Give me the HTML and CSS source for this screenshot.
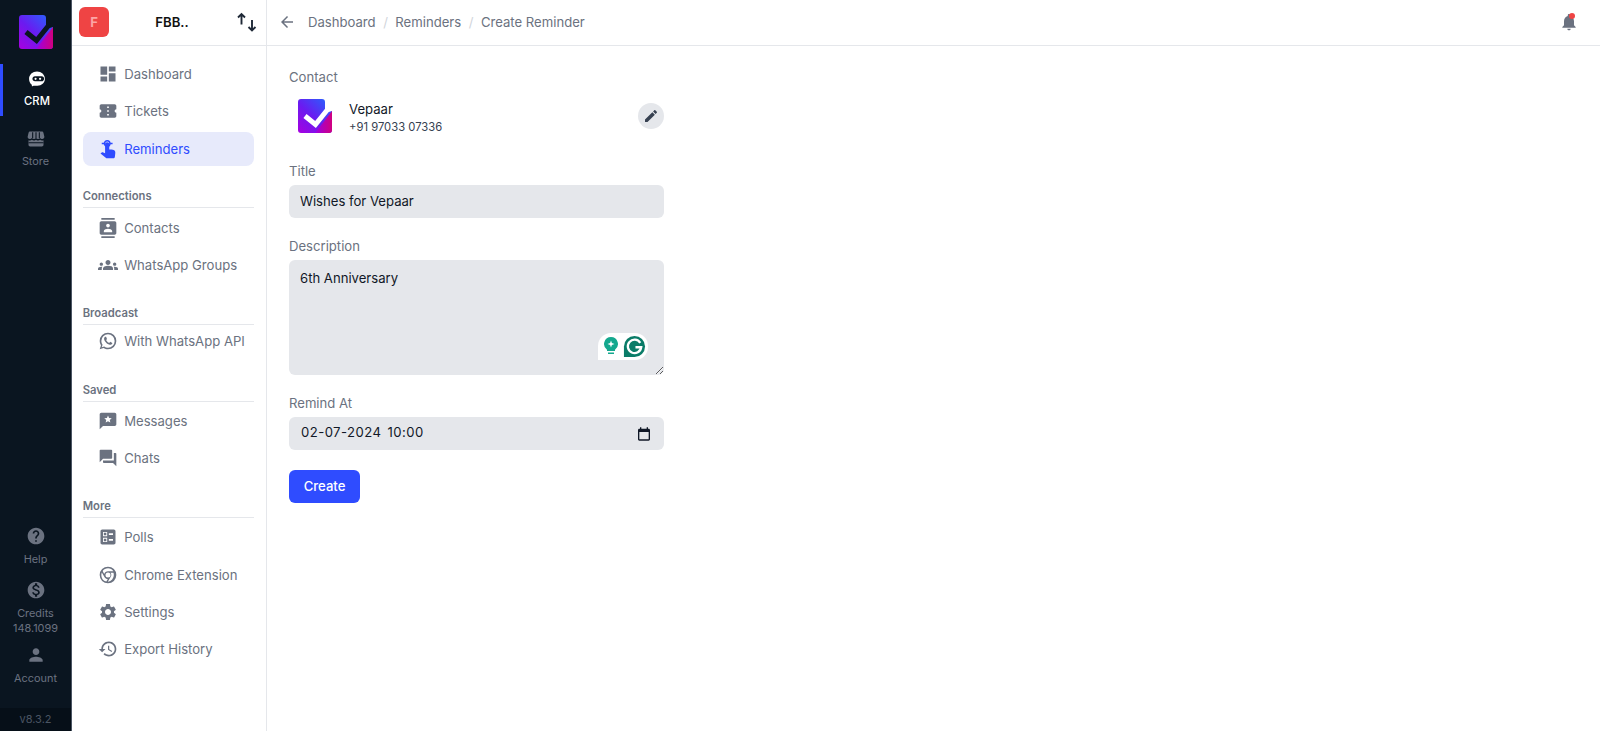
FILE: index.html
```html
<!DOCTYPE html>
<html lang="en">
<head>
<meta charset="utf-8">
<title>Create Reminder</title>
<link rel="stylesheet" href="styles.css">
</head>
<body>
<div class="app">
  <aside class="rail">
    <svg class="rail-logo" viewBox="0 0 34 34">
      <defs>
        <linearGradient id="lg1" x1="1" y1="0" x2="0" y2="1">
          <stop offset="0" stop-color="#1f6bff"/><stop offset="0.55" stop-color="#6a1bf0"/><stop offset="1" stop-color="#a800e0"/>
        </linearGradient>
        <linearGradient id="lg2" x1="0" y1="0" x2="1" y2="0">
          <stop offset="0" stop-color="#9a00e6"/><stop offset="1" stop-color="#d1007f"/>
        </linearGradient>
      </defs>
      <path d="M3 0H24Q27 0 27 3V14L34 12V31Q34 34 31 34H3Q0 34 0 31V3Q0 0 3 0Z" fill="url(#lg1)"/>
      <path d="M34 12V31Q34 34 31 34H17Z" fill="url(#lg2)"/>
      <path d="M7 17L17.500 25.500L30 10" fill="none" stroke="#0a1520" stroke-width="5"/>
    </svg>
    <nav class="rail-top">
      <a class="rail-item rail-item-active">
        <svg class="rail-icon" viewBox="0 0 24 24"><path fill="#fff" d="M12 3c5.200 0 9.500 3.800 9.500 8.800 0 4.800-4 8.400-9 8.400H8c-.8 0-1.300.4-2 .8-.2-1-.2-1.700-.5-2.300C3.500 17.200 2.500 14.700 2.500 11.800 2.500 6.800 6.800 3 12 3z"/><path fill="#0a1520" d="M9.500 8.800h8c2 0 3 1.200 3 2.900s-1.200 3.100-3 3.100h-8C7.800 14.800 6.500 13.500 6.500 11.800s1.300-3 3-3z"/><circle cx="10.300" cy="11.800" r="1.300" fill="#fff"/><circle cx="15.700" cy="11.800" r="1.300" fill="#fff"/></svg>
        <span>CRM</span>
      </a>
      <a class="rail-item">
        <svg class="rail-icon" viewBox="0 0 24 24"><path fill="#6b7280" d="M5 3h14c1 0 1.700.6 1.900 1.500L22 9c.3 1.800-1 3-2.500 3-1 0-2-.5-2.500-1.300-.6.800-1.500 1.300-2.500 1.300s-1.900-.5-2.500-1.300c-.6.800-1.500 1.300-2.500 1.300s-1.900-.5-2.500-1.300C6.500 11.500 5.500 12 4.500 12 3 12 1.700 10.800 2 9l1.100-4.500C3.300 3.600 4 3 5 3zM3 13.400c1.700.5 3.200.2 4-.4.800.6 1.800.9 2.500.9s2-.3 2.500-.9c.5.600 1.800.9 2.500.9s1.700-.3 2.500-.9c.8.600 2.300.9 4 .4V19c0 1.100-.9 2-2 2H5c-1.100 0-2-.9-2-2z"/><path stroke="#0a1520" stroke-width="1.300" d="M8 4v7M12 4v7M16 4v7M3 16.500h18"/></svg>
        <span>Store</span>
      </a>
    </nav>
    <nav class="rail-bottom">
      <a class="rail-item rail-item-tight">
        <svg class="rail-icon" viewBox="0 0 24 24"><path fill="#6b7280" d="M12 2C6.480 2 2 6.480 2 12s4.480 10 10 10 10-4.480 10-10S17.520 2 12 2zm1 17h-2v-2h2v2zm2.070-7.750l-.9.920C13.450 12.900 13 13.500 13 15h-2v-.5c0-1.100.45-2.100 1.170-2.830l1.240-1.260c.37-.36.59-.86.59-1.410 0-1.100-.9-2-2-2s-2 .9-2 2H8c0-2.210 1.790-4 4-4s4 1.790 4 4c0 .88-.36 1.680-.93 2.250z"/></svg>
        <span>Help</span>
      </a>
      <a class="rail-item rail-item-tight rail-item-credits">
        <svg class="rail-icon" viewBox="0 0 24 24"><path fill="#6b7280" d="M12 2C6.480 2 2 6.480 2 12s4.480 10 10 10 10-4.480 10-10S17.520 2 12 2zm1.410 16.090V20h-2.670v-1.930c-1.710-.36-3.160-1.460-3.270-3.400h1.960c.1 1.050.82 1.870 2.650 1.870 1.960 0 2.400-.98 2.400-1.590 0-.83-.44-1.610-2.670-2.140-2.480-.6-4.180-1.620-4.180-3.670 0-1.720 1.390-2.840 3.110-3.210V4h2.670v1.950c1.860.45 2.790 1.860 2.850 3.390H14.300c-.05-1.110-.64-1.870-2.220-1.870-1.500 0-2.400.68-2.400 1.640 0 .84.65 1.390 2.670 1.910s4.180 1.390 4.180 3.910c-.01 1.830-1.380 2.830-3.120 3.160z"/></svg>
        <span>Credits<br>148.1099</span>
      </a>
      <a class="rail-item rail-item-tight rail-item-account">
        <svg class="rail-icon" viewBox="0 0 24 24"><path fill="#6b7280" d="M12 12c2.210 0 4-1.790 4-4s-1.790-4-4-4-4 1.790-4 4 1.790 4 4 4zm0 2c-2.670 0-8 1.340-8 4v2h16v-2c0-2.660-5.330-4-8-4z"/></svg>
        <span>Account</span>
      </a>
    </nav>
    <div class="rail-version">v8.3.2</div>
  </aside>

  <aside class="sidebar">
    <header class="org">
      <div class="org-avatar">F</div>
      <div class="org-name">FBB..</div>
      <svg class="org-swap" viewBox="0 0 24 24"><path fill="none" stroke="#1f2937" stroke-width="1.900" d="M6.500 4V14.500M3 7.500l3.500-3.500L10 7.500M17 10V20.500M13.500 17l3.500 3.500 3.500-3.500"/></svg>
    </header>
    <nav class="menu">
      <a class="menu-item"><svg viewBox="0 0 24 24"><path d="M3 13h8V3H3v10zm0 8h8v-6H3v6zm10 0h8V11h-8v10zm0-18v6h8V3h-8z"/></svg>Dashboard</a>
      <a class="menu-item"><svg viewBox="0 0 24 24"><path d="M22 10V6c0-1.110-.9-2-2-2H4c-1.100 0-1.990.89-1.990 2v4c1.100 0 1.990.9 1.990 2s-.89 2-2 2v4c0 1.100.9 2 2 2h16c1.100 0 2-.9 2-2v-4c-1.100 0-2-.9-2-2s.9-2 2-2zm-9 7.500h-2v-2h2v2zm0-4.500h-2v-2h2v2zm0-4.500h-2v-2h2v2z"/></svg>Tickets</a>
      <a class="menu-item menu-item-active"><svg viewBox="0 0 24 24"><path d="M8.500 6c0-1 1-2 2.500-2s2.500 1 2.500 2v6.500H16c2.800 0 5 1.200 4.800 4l-.6 5c-.1.9-.9 1.500-1.800 1.500H10L3 17.500l1.500-1.200c.6-.5 1.200-.4 1.800-.1l2.200 1z"/><circle class="menu-ring" cx="11" cy="5.500" r="3.300"/><path class="menu-ring" d="M4.500 5.500h3M14.500 5.500h3"/></svg>Reminders</a>

      <h3 class="menu-title">Connections</h3>
      <a class="menu-item"><svg viewBox="0 0 24 24"><path d="M20 0H4v2h16V0zM4 24h16v-2H4v2zM20 4H4c-1.100 0-2 .9-2 2v12c0 1.100.9 2 2 2h16c1.100 0 2-.9 2-2V6c0-1.100-.9-2-2-2zm-8 2.750c1.240 0 2.250 1.010 2.250 2.250s-1.010 2.250-2.250 2.250S9.750 10.240 9.750 9 10.760 6.750 12 6.750zM17 17H7v-1.500c0-1.670 3.330-2.500 5-2.500s5 .83 5 2.500V17z"/></svg>Contacts</a>
      <a class="menu-item"><svg viewBox="0 0 24 24"><path d="M12 12.750c1.630 0 3.070.39 4.240.9 1.080.48 1.760 1.560 1.760 2.730V18H6v-1.610c0-1.180.68-2.260 1.760-2.730 1.170-.52 2.610-.91 4.240-.91zM4 13c1.100 0 2-.9 2-2s-.9-2-2-2-2 .9-2 2 .9 2 2 2zm1.130 1.100c-.37-.06-.74-.1-1.130-.1-.99 0-1.930.21-2.780.58C.48 14.900 0 15.620 0 16.430V18h4.500v-1.610c0-.83.23-1.610.63-2.290zM20 13c1.100 0 2-.9 2-2s-.9-2-2-2-2 .9-2 2 .9 2 2 2zm4 3.430c0-.81-.48-1.530-1.220-1.850-.85-.37-1.790-.58-2.780-.58-.39 0-.76.04-1.130.1.4.68.63 1.460.63 2.290V18H24v-1.570zM12 6c1.660 0 3 1.340 3 3s-1.340 3-3 3-3-1.340-3-3 1.340-3 3-3z"/></svg>WhatsApp Groups</a>

      <h3 class="menu-title menu-title-snug">Broadcast</h3>
      <a class="menu-item"><svg viewBox="0 0 24 24"><path d="M16.750 13.960c.25.13.41.2.46.3.06.11.04.61-.21 1.180-.2.56-1.240 1.100-1.700 1.120-.46.02-.47.36-2.960-.73-2.490-1.090-3.990-3.750-4.110-3.920-.12-.17-.96-1.380-.92-2.610.05-1.220.69-1.800.95-2.040.24-.26.51-.29.68-.26h.47c.15 0 .36-.06.55.45l.69 1.870c.06.13.1.28.01.44l-.27.41-.39.42c-.12.12-.26.25-.12.5.12.26.62 1.090 1.320 1.780.91.88 1.710 1.170 1.950 1.300.24.14.39.12.54-.04l.81-.94c.19-.25.35-.19.58-.11l1.670.88M12 2a10 10 0 0 1 10 10 10 10 0 0 1-10 10c-1.970 0-3.800-.57-5.350-1.550L2 22l1.550-4.650A9.969 9.969 0 0 1 2 12 10 10 0 0 1 12 2m0 2a8 8 0 0 0-8 8c0 1.720.54 3.310 1.460 4.610L4.500 19.500l2.890-.96A7.950 7.950 0 0 0 12 20a8 8 0 0 0 8-8 8 8 0 0 0-8-8z"/></svg>With WhatsApp API</a>

      <h3 class="menu-title menu-title-saved">Saved</h3>
      <a class="menu-item"><svg viewBox="0 0 24 24"><path fill-rule="evenodd" d="M20 2H4c-1.100 0-1.990.9-1.990 2L2 22l4-4h14c1.100 0 2-.9 2-2V4c0-1.100-.9-2-2-2zm-8 3.500l1.300 2.900 3.200.3-2.400 2.100.7 3.100-2.800-1.600-2.800 1.600.7-3.100-2.400-2.100 3.200-.3z"/></svg>Messages</a>
      <a class="menu-item"><svg viewBox="0 0 24 24"><path d="M21 6h-2v9H6v2c0 .55.45 1 1 1h11l4 4V7c0-.55-.45-1-1-1zm-4 6V3c0-.55-.45-1-1-1H3c-.55 0-1 .45-1 1v14l4-4h10c.55 0 1-.45 1-1z"/></svg>Chats</a>

      <h3 class="menu-title">More</h3>
      <a class="menu-item"><svg viewBox="0 0 24 24"><path fill-rule="evenodd" d="M13 9.500h5v-2h-5v2zm0 7h5v-2h-5v2zm6 4.500H5c-1.100 0-2-.9-2-2V5c0-1.100.9-2 2-2h14c1.100 0 2 .9 2 2v14c0 1.100-.9 2-2 2zM6 11h5V6H6v5zm1-4h3v3H7V7zM6 18h5v-5H6v5zm1-4h3v3H7v-3z"/></svg>Polls</a>
      <a class="menu-item"><svg viewBox="0 0 24 24"><path fill-rule="evenodd" d="M12 2a10 10 0 1 0 0 20 10 10 0 0 0 0-20zm0 2c2.700 0 5.100 1.300 6.500 3.400H12c-2.200 0-4 1.400-4.600 3.300L5.600 7.300C7 5.300 9.400 4 12 4zm3 8a3 3 0 1 1-6 0 3 3 0 0 1 6 0zM4 12c0-1.100.2-2.100.6-3l3.300 5.700c.8 1.300 2.200 2.200 3.800 2.200l-1.700 3A8 8 0 0 1 4 12zm8 8h-.2l3.300-5.600c.6-.7.900-1.500.9-2.400 0-1-.4-1.900-1-2.600h3.500c.3.800.5 1.700.5 2.600a8 8 0 0 1-7 8z"/></svg>Chrome Extension</a>
      <a class="menu-item"><svg viewBox="0 0 24 24"><path d="M19.140 12.940c.04-.3.06-.61.06-.94 0-.32-.02-.64-.07-.94l2.030-1.580c.18-.14.23-.41.12-.61l-1.920-3.320c-.12-.22-.37-.29-.59-.22l-2.390.96c-.5-.38-1.030-.7-1.620-.94l-.36-2.540c-.04-.24-.24-.41-.48-.41h-3.840c-.24 0-.43.17-.47.41l-.36 2.540c-.59.24-1.130.57-1.620.94l-2.390-.96c-.22-.08-.47 0-.59.22L2.740 8.870c-.12.21-.08.47.12.61l2.030 1.580c-.05.3-.09.63-.09.94s.02.64.07.94l-2.030 1.580c-.18.14-.23.41-.12.61l1.920 3.320c.12.22.37.29.59.22l2.390-.96c.5.38 1.030.7 1.620.94l.36 2.540c.05.24.24.41.48.41h3.840c.24 0 .44-.17.47-.41l.36-2.540c.59-.24 1.130-.56 1.620-.94l2.390.96c.22.08.47 0 .59-.22l1.920-3.320c.12-.22.07-.47-.12-.61l-2.010-1.580zM12 15.600c-1.980 0-3.600-1.620-3.600-3.600s1.620-3.600 3.600-3.600 3.600 1.620 3.600 3.600-1.620 3.600-3.600 3.600z"/></svg>Settings</a>
      <a class="menu-item"><svg viewBox="0 0 24 24"><path d="M13 3c-4.970 0-9 4.030-9 9H1l3.890 3.890.07.14L9 12H6c0-3.870 3.130-7 7-7s7 3.130 7 7-3.130 7-7 7c-1.930 0-3.680-.79-4.940-2.060l-1.420 1.420C8.270 19.990 10.510 21 13 21c4.970 0 9-4.030 9-9s-4.030-9-9-9zm-1 5v5l4.280 2.540.72-1.210-3.500-2.080V8H12z"/></svg>Export History</a>
    </nav>
  </aside>

  <main class="main">
    <header class="topbar">
      <svg class="back" viewBox="0 0 24 24"><path d="M20 11H7.830l5.590-5.590L12 4l-8 8 8 8 1.410-1.410L7.830 13H20v-2z"/></svg>
      <ol class="crumbs">
        <li>Dashboard</li>
        <li class="crumb-sep">/</li>
        <li>Reminders</li>
        <li class="crumb-sep">/</li>
        <li>Create Reminder</li>
      </ol>
      <div class="bell">
        <svg viewBox="0 0 24 24"><path d="M12 22c1.100 0 2-.9 2-2h-4c0 1.100.89 2 2 2zm6-6v-5c0-3.070-1.640-5.640-4.500-6.320V4c0-.83-.67-1.500-1.500-1.500s-1.500.67-1.500 1.500v.68C7.630 5.360 6 7.920 6 11v5l-2 2v1h16v-1l-2-2z"/></svg>
        <span class="bell-dot"></span>
      </div>
    </header>
    <form class="form">
      <div class="field">
        <label class="label">Contact</label>
        <div class="contact">
          <svg class="contact-logo" viewBox="0 0 34 34">
            <path d="M3 0H24Q27 0 27 3V14L34 12V31Q34 34 31 34H3Q0 34 0 31V3Q0 0 3 0Z" fill="url(#lg1)"/>
            <path d="M34 12V31Q34 34 31 34H17Z" fill="url(#lg2)"/>
            <path d="M7 17L17.500 25.500L30 10" fill="none" stroke="#fff" stroke-width="5"/>
          </svg>
          <div class="contact-text">
            <div class="contact-name">Vepaar</div>
            <div class="contact-phone">+91 97033 07336</div>
          </div>
          <button type="button" class="edit">
            <svg viewBox="0 0 24 24"><path d="M3 17.250V21h3.750L17.810 9.940l-3.750-3.750L3 17.250zM20.710 7.040c.39-.39.39-1.020 0-1.410l-2.340-2.340c-.39-.39-1.020-.39-1.410 0l-1.830 1.830 3.750 3.750 1.830-1.830z"/></svg>
          </button>
        </div>
      </div>
      <div class="field">
        <label class="label">Title</label>
        <input class="input" type="text" value="Wishes for Vepaar">
      </div>
      <div class="field">
        <label class="label">Description</label>
        <div class="area-wrap">
          <textarea class="input area">6th Anniversary</textarea>
          <div class="gram">
            <svg class="gram-bulb" viewBox="0 0 16 20"><path fill="#14a88e" d="M8 1a7 7 0 0 1 4 12.700V15H4v-1.300A7 7 0 0 1 8 1zM5 16.500h6V18H5z"/><path fill="#fff" d="M8 4.500l.9 2.600 2.600.9-2.600.9L8 11.500l-.9-2.600L4.500 8l2.600-.9z"/></svg>
            <svg class="gram-g" viewBox="0 0 24 24"><path fill="#0a7c68" d="M12 1a11 11 0 1 1 0 22H1V12A11 11 0 0 1 12 1z"/><path fill="none" stroke="#fff" stroke-width="2.400" d="M18 8.200A7 7 0 1 0 19 12.800H13"/></svg>
          </div>
        </div>
      </div>
      <div class="field">
        <label class="label">Remind At</label>
        <div class="date-wrap">
          <input class="input date" type="text" value="02-07-2024 10:00">
          <svg class="date-icon" viewBox="0 0 24 24"><path d="M19 4h-1V2h-2v2H8V2H6v2H5c-1.100 0-2 .9-2 2v14c0 1.100.9 2 2 2h14c1.100 0 2-.9 2-2V6c0-1.100-.9-2-2-2zm0 16H5V9h14v11z"/></svg>
        </div>
      </div>
      <button type="button" class="create">Create</button>
    </form>
  </main>
</div>
</body>
</html>
```
FILE: styles.css
```css
* { box-sizing: border-box; }
html, body { margin: 0; height: 100%; overflow: hidden; }
body { font-family: Inter, "Liberation Sans", sans-serif; font-size: 13.125px; color: #111827; background: #fff; }
.app { display: flex; height: 731px; }

/* Rail */
.rail { width: 72px; flex: none; background: #0a1520; border-right: 1px solid #4b5563; display: flex; flex-direction: column; align-items: stretch; }
.rail-logo { width: 34px; height: 34px; margin: 15px 0 0 19px; flex: none; }
.rail-top { margin-top: 15px; display: flex; flex-direction: column; }
.rail-bottom { margin-top: auto; display: flex; flex-direction: column; padding-bottom: 22px; }
.rail-item { display: flex; flex-direction: column; align-items: center; height: 52px; padding-top: 5px; color: #6b7280; font-size: 10.900px; line-height: 15px; text-align: center; }
.rail-item span { margin-top: 5px; }
.rail-item-active { color: #fff; font-size: 11.250px; font-weight: 500; border-left: 3px solid #2f4cff; margin-bottom: 8px; }
.rail-icon { width: 20px; height: 20px; flex: none; }
.rail-item-tight { height: auto; padding-top: 0; margin-top: 12px; }
.rail-item-tight span { margin-top: 6px; }
.rail-item-credits { margin-top: 13px; }
.rail-item-account { margin-top: 9px; }
.rail-version { height: 23px; flex: none; background: #060f18; color: #4b5563; font-size: 11px; line-height: 23px; text-align: center; }

/* Sidebar */
.sidebar { width: 195px; flex: none; border-right: 1px solid #e5e7eb; display: flex; flex-direction: column; }
.org { height: 46px; flex: none; border-bottom: 1px solid #e5e7eb; display: flex; align-items: center; padding: 0 7px 1px 7px; }
.org-avatar { width: 30px; height: 30px; flex: none; border-radius: 6px; background: #ef4444; color: #fca5a5; font-weight: 700; font-size: 13.125px; line-height: 30px; text-align: center; }
.org-name { flex: 1; text-align: center; font-weight: 600; font-size: 13.125px; color: #111; }
.org-swap { width: 24px; height: 24px; flex: none; }
.menu { display: flex; flex-direction: column; padding: 11px 12px 0 10.700px; }
.menu-item { display: flex; align-items: center; gap: 6.500px; height: 34px; flex: none; margin-bottom: 3.330px; padding-left: 15px; border-radius: 8px; color: #6b7280; font-size: 13.125px; white-space: nowrap; }
.menu-item svg { width: 20px; height: 20px; flex: none; fill: #6b7280; }
.menu-item-active { background: #e7eafb; color: #2f4cff; }
.menu-item-active svg { fill: #2f4cff; }
.menu-ring { fill: none; stroke: #2f4cff; stroke-width: 1.800; }
.menu-item-active svg .menu-ring { fill: none; }
.menu-title { margin: 19.200px 0 2.500px; padding-bottom: 3px; height: 20px; border-bottom: 1px solid #e5e7eb; color: #6b7280; font-size: 11.250px; font-weight: 600; line-height: 16px; }
.menu-title-snug { margin-bottom: -.67px; }
.menu-title-saved { margin-top: 20.700px; margin-bottom: 2px; }

/* Main */
.main { flex: 1; min-width: 0; display: flex; flex-direction: column; }
.topbar { height: 46px; flex: none; border-bottom: 1px solid #e5e7eb; display: flex; align-items: center; padding: 0 21px 1px 11px; }
.back { width: 18px; height: 18px; flex: none; fill: #6b7280; }
.crumbs { list-style: none; display: flex; gap: 7.500px; margin: 0 0 0 12px; padding: 0; color: #6b7280; font-size: 13.125px; }
.crumb-sep { color: #d1d5db; }
.bell { position: relative; margin-left: auto; width: 20px; height: 20px; }
.bell svg { width: 20px; height: 20px; fill: #6b7280; display: block; }
.bell-dot { position: absolute; top: 1px; right: 4px; width: 6px; height: 6px; border-radius: 50%; background: #ef4444; }
.form { width: 375px; margin: 21px 0 0 22px; display: flex; flex-direction: column; }
.field { display: flex; flex-direction: column; margin-bottom: 18px; }
.label { color: #6b7280; font-size: 13.125px; line-height: 20px; margin-bottom: 4px; }
.contact { display: flex; align-items: center; padding: 0 0 0 9px; height: 46px; margin-top: 2px; margin-bottom: 3.500px; }
.contact-logo { width: 34px; height: 34px; flex: none; }
.contact-text { margin-left: 17px; padding-top: 4px; flex: 1; }
.contact-name { font-size: 13.125px; line-height: 18px; color: #111827; }
.contact-phone { font-size: 11.250px; line-height: 18px; color: #374151; }
.edit { width: 26px; height: 26px; border: 0; padding: 5px; border-radius: 50%; background: #e5e7eb; display: block; }
.edit svg { width: 16px; height: 16px; display: block; fill: #374151; }
.input { display: block; width: 100%; height: 33px; border: 0; border-radius: 6px; background: #e5e7eb; padding: 0 12px 0 11px; font: inherit; font-size: 13.125px; color: #111827; }
.area-wrap, .date-wrap { position: relative; }
.area { height: 115px; padding: 10px 11px; resize: vertical; }
.gram { position: absolute; right: 16px; bottom: 15px; width: 50px; height: 27px; display: flex; align-items: center; gap: 4px; padding-left: 5px; background: #fff; border-radius: 13px 13px 13px 0; }
.gram-bulb { width: 16px; height: 20px; flex: none; }
.gram-g { width: 23px; height: 23px; flex: none; }
.date { letter-spacing: .45px; word-spacing: 2px; padding-left: 12px; padding-bottom: 2px; }
.date-icon { position: absolute; right: 12px; top: 9px; width: 16px; height: 16px; fill: #111827; }
.create { align-self: flex-start; width: 71px; height: 33px; margin-top: 2px; border: 0; border-radius: 6px; background: #2f4cff; color: #fff; font: inherit; font-size: 13.125px; font-weight: 500; }
```
